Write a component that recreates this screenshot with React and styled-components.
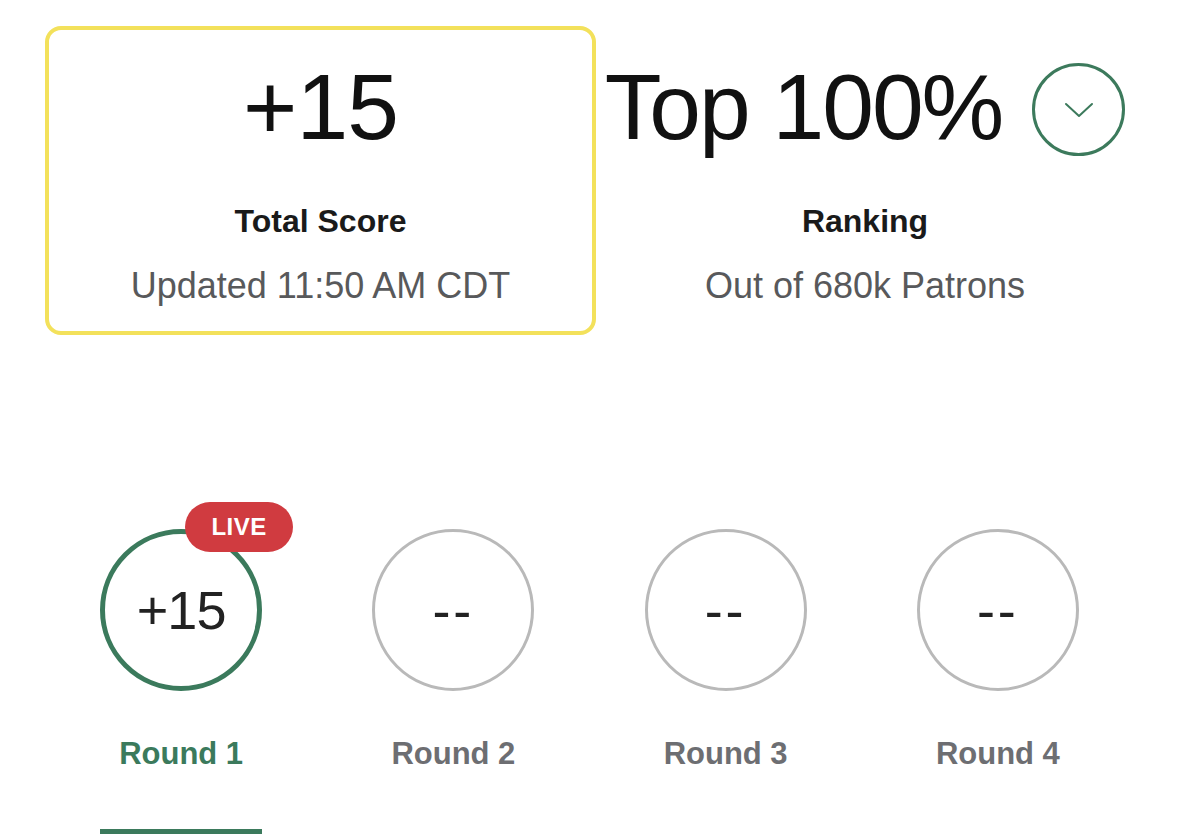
import React from 'react'
import styled, { createGlobalStyle } from 'styled-components'

const GlobalStyle = createGlobalStyle`
  html, body {
    margin: 0;
    padding: 0;
    background: #ffffff;
    font-family: "Liberation Sans", Arial, sans-serif;
    color: #111;
  }
`

const Page = styled.div`
  width: 1134px;
  padding: 26px 0 0 45px;
  height: 835px;
  box-sizing: border-box;
  overflow: hidden;
`

const Summary = styled.div`
  display: grid;
  grid-template-columns: 551px 1fr;
`

const StatCard = styled.div`
  display: flex;
  flex-direction: column;
  align-items: center;
  box-sizing: border-box;
  height: 309px;
  padding-top: 30px;
  border: 4px solid ${(props) => (props.highlight ? '#f3e15b' : 'transparent')};
  border-radius: 16px;
  white-space: nowrap;
`

const BigValue = styled.div`
  display: flex;
  align-items: center;
  gap: 30px;
  font-size: 93px;
  line-height: 95px;
  font-weight: 400;
  letter-spacing: ${(props) => (props.tight ? '-2px' : '-1px')};
  color: #111;
`

const StatLabel = styled.div`
  margin-top: 46px;
  font-size: 32px;
  line-height: 40px;
  font-weight: 700;
  color: #1a1a1a;
`

const StatNote = styled.div`
  margin-top: 23px;
  font-size: 36px;
  line-height: 44px;
  color: #58595b;
`

const ExpandButton = styled.span`
  display: inline-flex;
  align-items: center;
  justify-content: center;
  width: 93px;
  height: 93px;
  transform: translateY(2px);
  box-sizing: border-box;
  border: 3px solid #3c7a5c;
  border-radius: 50%;
  letter-spacing: 0;
`

const Rounds = styled.div`
  display: grid;
  grid-template-columns: repeat(4, 1fr);
  margin-top: 194px;
`

const RoundTab = styled.div`
  display: flex;
  flex-direction: column;
  align-items: center;
`

const Ring = styled.div`
  position: relative;
  display: flex;
  align-items: center;
  justify-content: center;
  width: 162px;
  height: 162px;
  box-sizing: border-box;
  border-radius: 50%;
  border: ${(props) => (props.active ? '5px solid #3b7a5c' : '3px solid #b9b9b9')};
  font-size: 54px;
  letter-spacing: ${(props) => (props.active ? '-1px' : '3px')};
  color: #222;
`

const LiveBadge = styled.span`
  position: absolute;
  top: -32px;
  left: 80px;
  width: 108px;
  height: 50px;
  border-radius: 25px;
  background: #d03b40;
  color: #fff;
  font-size: 24px;
  font-weight: 700;
  line-height: 50px;
  text-align: center;
  letter-spacing: 0.5px;
`

const RoundName = styled.div`
  margin-top: 43px;
  font-size: 31px;
  line-height: 40px;
  font-weight: 700;
  color: ${(props) => (props.active ? '#3b7a5c' : '#6d6e72')};
`

const Underline = styled.div`
  margin-top: 55px;
  width: 162px;
  height: 5px;
  background: ${(props) => (props.active ? '#3b7a5c' : 'transparent')};
`

const rounds = [
  { name: 'Round 1', score: '+15', live: true },
  { name: 'Round 2', score: '--' },
  { name: 'Round 3', score: '--' },
  { name: 'Round 4', score: '--' },
]

function Chevron() {
  return (
    <svg width="30" height="16" viewBox="0 0 30 16" fill="none">
      <path d="M2 2 L15 14 L28 2" stroke="#3c7a5c" strokeWidth="2" strokeLinecap="round" strokeLinejoin="round" />
    </svg>
  )
}

export default function App() {
  return (
    <>
      <GlobalStyle />
      <Page>
        <Summary>
          <StatCard highlight>
            <BigValue>+15</BigValue>
            <StatLabel>Total Score</StatLabel>
            <StatNote>Updated 11:50 AM CDT</StatNote>
          </StatCard>
          <StatCard>
            <BigValue tight>
              <span>Top 100%</span>
              <ExpandButton>
                <Chevron />
              </ExpandButton>
            </BigValue>
            <StatLabel>Ranking</StatLabel>
            <StatNote>Out of 680k Patrons</StatNote>
          </StatCard>
        </Summary>
        <Rounds>
          {rounds.map((round, i) => (
            <RoundTab key={round.name}>
              <Ring active={i === 0}>
                {round.score}
                {round.live && <LiveBadge>LIVE</LiveBadge>}
              </Ring>
              <RoundName active={i === 0}>{round.name}</RoundName>
              <Underline active={i === 0} />
            </RoundTab>
          ))}
        </Rounds>
      </Page>
    </>
  )
}
